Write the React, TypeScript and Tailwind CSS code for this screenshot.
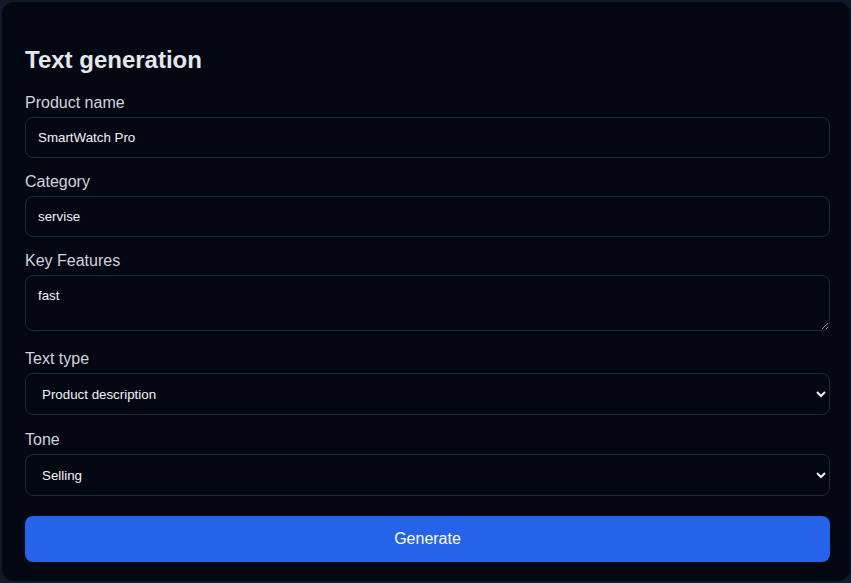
import { useState } from 'react';

export default function App() {
  const [name, setName] = useState('SmartWatch Pro');
  const [category, setCategory] = useState('servise');
  const [features, setFeatures] = useState('fast');
  const [textType, setTextType] = useState('description');
  const [tone, setTone] = useState('selling');

  const labelClass = 'block mb-[2px] text-base leading-6 text-[#d1d5db]';
  const fieldClass =
    'w-full rounded-lg border border-[#1f2937] bg-[#030712] px-3 text-[13.33px] text-[#f3f4f6] outline-none';

  return (
    <div
      className="min-h-[583px] bg-[#111827] pt-[2px] pl-[2px] pr-[1px] pb-[2px]"
      style={{ fontFamily: '"Liberation Sans", Arial, sans-serif' }}
    >
      <div className="h-[579px] rounded-xl bg-[#030712] pl-[23px] pr-[20px] pt-[42px]">
        <h2 className="mb-[15px] text-2xl leading-8 font-bold text-[#e5e7eb]">Text generation</h2>

        <div className="mb-[12px]">
          <label className={labelClass}>Product name</label>
          <input
            className={`${fieldClass} h-[41px]`}
            value={name}
            onChange={(e) => setName(e.target.value)}
          />
        </div>

        <div className="mb-[12px]">
          <label className={labelClass}>Category</label>
          <input
            className={`${fieldClass} h-[41px]`}
            value={category}
            onChange={(e) => setCategory(e.target.value)}
          />
        </div>

        <div className="mb-[16px]">
          <label className={labelClass}>Key Features</label>
          <textarea
            className={`${fieldClass} block h-[56px] py-3 leading-[15px]`}
            value={features}
            onChange={(e) => setFeatures(e.target.value)}
          />
        </div>

        <div className="mb-[13px]">
          <label className={labelClass}>Text type</label>
          <select
            className={`${fieldClass} block h-[42px]`}
            value={textType}
            onChange={(e) => setTextType(e.target.value)}
          >
            <option value="description">Product description</option>
            <option value="ad">Advertising text</option>
            <option value="post">Social media post</option>
          </select>
        </div>

        <div className="mb-[20px]">
          <label className={labelClass}>Tone</label>
          <select
            className={`${fieldClass} block h-[42px]`}
            value={tone}
            onChange={(e) => setTone(e.target.value)}
          >
            <option value="selling">Selling</option>
            <option value="friendly">Friendly</option>
            <option value="formal">Formal</option>
          </select>
        </div>

        <button className="block h-[46px] w-full rounded-lg bg-[#2563eb] text-base text-white">
          Generate
        </button>
      </div>
    </div>
  );
}
